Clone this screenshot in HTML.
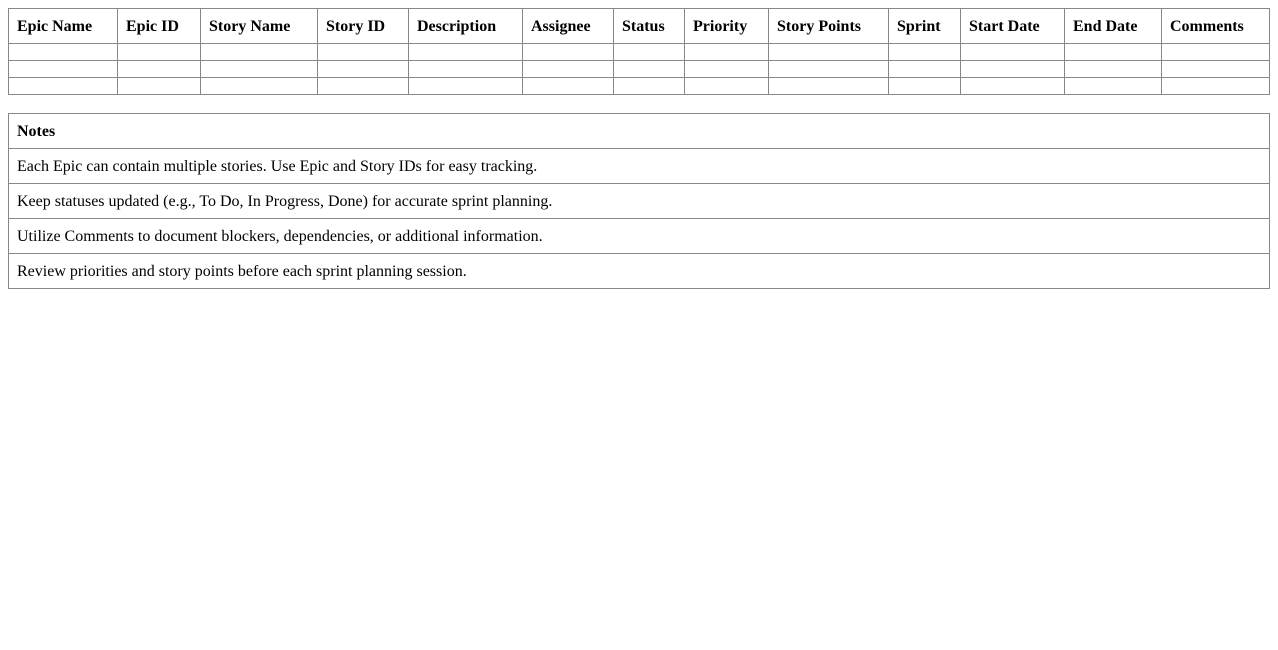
<!DOCTYPE html>
<html><head><meta charset="utf-8"><style>
body{margin:8px;font-family:"Liberation Serif",serif;font-size:16px;color:#000;background:#fff}
table{border-collapse:collapse;width:1262px;table-layout:fixed}
table.t{width:1261px}
td,th{border:1px solid #888;padding:1px 8px 0 8px;text-align:left;white-space:nowrap}
th{height:33px;font-weight:bold}
.e td{height:15px}
.n{margin-top:18px}
.n td{height:33px}
</style></head><body>
<table class="t">
<colgroup><col style="width:109px"><col style="width:83px"><col style="width:117px"><col style="width:91px"><col style="width:114px"><col style="width:91px"><col style="width:71px"><col style="width:84px"><col style="width:120px"><col style="width:72px"><col style="width:104px"><col style="width:97px"><col style="width:108px"></colgroup>
<tr><th>Epic Name</th><th>Epic ID</th><th>Story Name</th><th>Story ID</th><th>Description</th><th>Assignee</th><th>Status</th><th>Priority</th><th>Story Points</th><th>Sprint</th><th>Start Date</th><th>End Date</th><th>Comments</th></tr>
<tr class="e"><td></td><td></td><td></td><td></td><td></td><td></td><td></td><td></td><td></td><td></td><td></td><td></td><td></td></tr>
<tr class="e"><td></td><td></td><td></td><td></td><td></td><td></td><td></td><td></td><td></td><td></td><td></td><td></td><td></td></tr>
<tr class="e"><td></td><td></td><td></td><td></td><td></td><td></td><td></td><td></td><td></td><td></td><td></td><td></td><td></td></tr>
</table>
<table class="n">
<tr><td><b>Notes</b></td></tr>
<tr><td>Each Epic can contain multiple stories. Use Epic and Story IDs for easy tracking.</td></tr>
<tr><td>Keep statuses updated (e.g., To Do, In Progress, Done) for accurate sprint planning.</td></tr>
<tr><td>Utilize Comments to document blockers, dependencies, or additional information.</td></tr>
<tr><td>Review priorities and story points before each sprint planning session.</td></tr>
</table>
</body></html>
